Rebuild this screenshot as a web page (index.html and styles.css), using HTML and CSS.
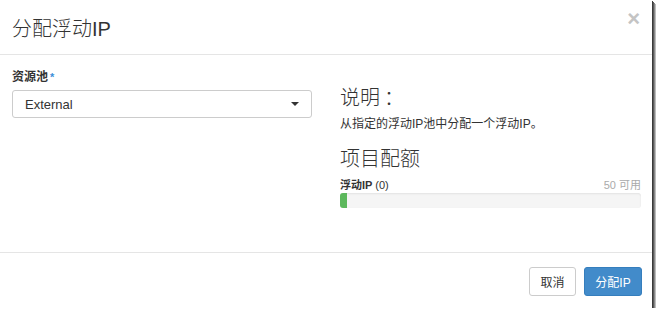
FILE: index.html
```html
<!DOCTYPE html>
<html lang="zh-CN">
<head>
  <meta charset="UTF-8">
  <title>分配浮动IP</title>
  <link rel="stylesheet" href="styles.css">
</head>
<body>
  <div class="modal">
    <div class="modal-header">
      <h3 class="modal-title">分配浮动IP</h3>
      <span class="close">&times;</span>
    </div>
    <div class="modal-body">
      <div class="left-col">
        <label class="field-label">资源池<span class="required">*</span></label>
        <div class="select-box">
          <span>External</span>
          <span class="caret"></span>
        </div>
      </div>
      <div class="right-col">
        <h3 class="section-title">说明<span class="colon">：</span></h3>
        <p class="help-text">从指定的浮动IP池中分配一个浮动IP。</p>
        <h3 class="section-title quota-title">项目配额</h3>
        <div class="quota-row">
          <span class="quota-name">浮动IP <span class="quota-count">(0)</span></span>
          <span class="quota-avail">50 可用</span>
        </div>
        <div class="progress">
          <div class="progress-bar" style="width: 7px"></div>
        </div>
      </div>
    </div>
    <div class="modal-footer">
      <button class="btn btn-default">取消</button>
      <button class="btn btn-primary">分配IP</button>
    </div>
  </div>
</body>
</html>
```

FILE: styles.css
```css
body {
  margin: 0;
  background-color: #ffffff;
  font-family: "Liberation Sans", "Noto Sans CJK SC", sans-serif;
  color: #333333;
}
.modal {
  width: 652px;
  height: 308px;
  background-color: #ffffff;
  box-shadow: 1px 1px 0 #3a3a3a, 2px 2px 0 #5a5a5a, 3px 3px 0 #8a8a8a, 4px 4px 0 #bdbdbd;
  display: flex;
  flex-direction: column;
}
.modal-header {
  height: 54px;
  border-bottom: 1px solid #e5e5e5;
  display: flex;
  align-items: center;
  justify-content: space-between;
  padding: 0 12px;
}
.modal-title {
  margin: 0;
  font-size: 20px;
  font-weight: 300;
  color: #333333;
}
.close {
  font-size: 22px;
  font-weight: bold;
  color: #c4c4c4;
  line-height: 1;
  margin-top: -16px;
  margin-right: 0;
}
.modal-body {
  height: 197px;
  display: grid;
  grid-template-columns: 300px 301px;
  column-gap: 28px;
  padding: 0 12px;
}
.field-label {
  display: block;
  margin-top: 15px;
  font-size: 12px;
  font-weight: bold;
  height: 20px;
  line-height: 14px;
}
.required {
  color: #3b8fd9;
  font-size: 11px;
  vertical-align: top;
  margin-left: 2px;
}
.select-box {
  height: 26px;
  border: 1px solid #cccccc;
  border-radius: 3px;
  display: flex;
  align-items: center;
  justify-content: space-between;
  padding: 0 12px;
  font-size: 13px;
  color: #333333;
}
.caret {
  width: 0;
  height: 0;
  border-left: 4px solid transparent;
  border-right: 4px solid transparent;
  border-top: 4px solid #333333;
}
.section-title {
  margin: 32px 0 0;
  font-size: 20px;
  font-weight: 300;
  line-height: 22px;
}
.colon {
  margin-left: 4px;
}
.quota-title {
  margin-top: 16px;
}
.help-text {
  margin: 7px 0 0;
  font-size: 12px;
  line-height: 16px;
  color: #333333;
}
.quota-row {
  margin-top: 8px;
  display: flex;
  justify-content: space-between;
  font-size: 11px;
  line-height: 14px;
}
.quota-name {
  font-weight: bold;
}
.quota-count {
  font-weight: normal;
}
.quota-avail {
  color: #aaaaaa;
}
.progress {
  margin-top: 1px;
  height: 15px;
  background-color: #f5f5f5;
  border-radius: 3px;
  box-shadow: inset 0 1px 2px rgba(0, 0, 0, 0.08);
  overflow: hidden;
}
.progress-bar {
  height: 100%;
  background-color: #5cb85c;
}
.modal-footer {
  flex: 1;
  border-top: 1px solid #e5e5e5;
  display: flex;
  justify-content: flex-end;
  align-items: flex-start;
  gap: 8px;
  padding: 14px 10px 0 12px;
}
.btn {
  height: 29px;
  padding: 0;
  font-size: 12px;
  white-space: nowrap;
  border-radius: 3px;
  font-family: "Liberation Sans", "Noto Sans CJK SC", sans-serif;
  cursor: pointer;
}
.btn-default {
  width: 47px;
  background-color: #ffffff;
  border: 1px solid #cccccc;
  color: #333333;
}
.btn-primary {
  width: 58px;
  background-color: #428bca;
  border: 1px solid #357ebd;
  color: #ffffff;
}
```
